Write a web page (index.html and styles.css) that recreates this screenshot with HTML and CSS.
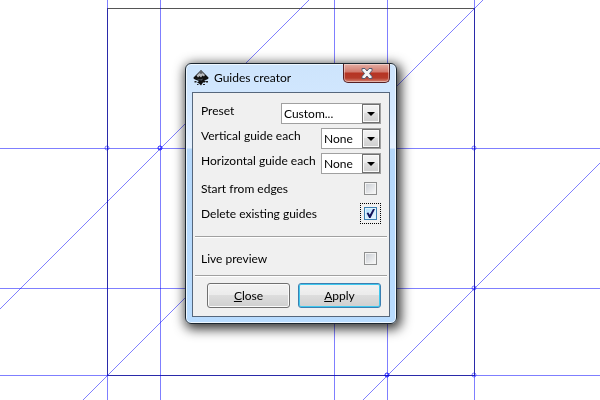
FILE: index.html
```html
<!DOCTYPE html>
<html lang="en">
<head>
  <meta charset="UTF-8">
  <title>Guides creator</title>
  <link rel="stylesheet" href="styles.css">
</head>
<body>

<svg class="canvas" aria-hidden="true">
  <rect class="page" x="107.5" y="8.5" width="367" height="367"/>
  <g class="guides">
    <path d="M107.5 0V2000M160.5 0V2000M334.5 0V2000M387.5 0V2000M474.5 0V2000"/>
    <path d="M0 148.5H4000M0 288.5H4000M0 375.5H4000"/>
    <path d="M309 0L0 309M483 0L0 483M763 0L0 763"/>
  </g>
  <g class="anchors">
    <circle cx="107" cy="148" r="2"/>
    <circle cx="160" cy="148" r="2"/>
    <circle cx="160" cy="148" r="2"/>
    <circle cx="474" cy="148" r="2"/>
    <circle cx="474" cy="288" r="2"/>
    <circle cx="387" cy="375" r="2"/>
    <circle cx="387" cy="375" r="2"/>
    <circle cx="474" cy="375" r="2"/>
  </g>
</svg>

<div class="window" role="dialog" aria-labelledby="title">
  <div class="titlebar">
    <svg class="logo" width="16" height="18" viewBox="0 0 16 18" aria-hidden="true">
      <path d="M8 1L15 8Q16.500 9.500 14 10.500L11 11.500L13 12L12 13.500H10L9 15L8 16.500L6 14.500L4 13.500L6 12L2 10.500Q-.5 9.500 1 8Z" fill="#111"/>
      <path d="M8 2L12 6L11 7.500L9.500 6.500L8 8.500L6.500 7L5 8.500L3.500 6.500Z" fill="#b9bcc0"/>
      <path d="M6 4L8 2L10 4L8 5Z" fill="#5a5e63"/>
      <path d="M3 9.500L7 10.500L10 9.500L9 11.500L6 11Z" fill="#4f5660"/>
      <path d="M1.500 12H3.500V13.500H1.500ZM13 12H15V13.500H13ZM4 15H5.500V16H4ZM10 15H12V16H10Z" fill="#222"/>
    </svg>
    <h1 id="title">Guides creator</h1>
    <button class="close" type="button" aria-label="Close window">
      <svg width="12" height="11" viewBox="0 0 12 11">
        <path d="M1 .5H4L6 3L8 .5H11V2.500L8.500 5.500L11 8.500V10.500H8L6 8L4 10.500H1V8.500L3.500 5.500L1 2.500Z" fill="#f4f4f4" stroke="#555b70"/>
      </svg>
    </button>
  </div>

  <form class="content">
    <div class="row">
      <label for="preset">Preset</label>
      <span class="combo wide">
        <select id="preset"><option>Custom...</option></select>
        <span class="arrow"><svg width="8" height="4"><path d="M0 0H8L4 4Z"/></svg></span>
      </span>
    </div>
    <div class="row">
      <label for="vertical">Vertical guide each</label>
      <span class="combo">
        <select id="vertical"><option>None</option></select>
        <span class="arrow"><svg width="8" height="4"><path d="M0 0H8L4 4Z"/></svg></span>
      </span>
    </div>
    <div class="row">
      <label for="horizontal">Horizontal guide each</label>
      <span class="combo">
        <select id="horizontal"><option>None</option></select>
        <span class="arrow"><svg width="8" height="4"><path d="M0 0H8L4 4Z"/></svg></span>
      </span>
    </div>
    <div class="row check">
      <label for="edges">Start from edges</label>
      <span class="tick"><input type="checkbox" id="edges"></span>
    </div>
    <div class="row check">
      <label for="delete">Delete existing guides</label>
      <span class="tick focused"><input type="checkbox" id="delete" checked></span>
    </div>
    <hr>
    <div class="row check preview">
      <label for="live">Live preview</label>
      <span class="tick"><input type="checkbox" id="live"></span>
    </div>
    <hr>
    <div class="actions">
      <button type="button"><u>C</u>lose</button>
      <button type="button" class="default"><u>A</u>pply</button>
    </div>
  </form>
</div>

</body>
</html>
```

FILE: styles.css
```css
* {
  box-sizing: border-box;
}
body {
  margin: 0;
  background: #fff;
  color: #000;
  font: 12px/16px Lato, "Open Sans", sans-serif;
}
.canvas {
  position: fixed;
  inset: 0;
  width: 100%;
  height: 100%;
}
.page {
  fill: none;
  stroke: #555;
}
.guides {
  stroke: rgba(0,0,255,0.5);
}
.guides path {
  fill: none;
}
.anchors {
  fill: none;
  stroke: rgba(0,0,255,0.5);
}

/* dialog window */
.window {
  position: absolute;
  left: 185px;
  top: 63px;
  width: 212px;
  padding: 0 6px 6px;
  border: 1px solid #1c2730;
  border-radius: 6px;
  background: linear-gradient(#cde4fc, #d3e8ff 45px, #e5f1ff 84px, #b5d8fb 85px, #b9dcff);
  box-shadow: inset 0 0 0 1px #eef7ff, 2px 3px 12px 2px rgba(0,0,0,0.8);
}
.titlebar {
  display: flex;
  align-items: center;
  gap: 5px;
  height: 28px;
  padding-left: 1px;
}
.titlebar h1 {
  flex: 1;
  margin: 0;
  font-size: 12px;
  font-weight: normal;
}
.close {
  display: flex;
  align-items: center;
  justify-content: center;
  align-self: flex-start;
  width: 47px;
  height: 19px;
  padding: 0;
  border: 1px solid #552024;
  border-top: 0;
  border-radius: 0 0 5px 5px;
  background: linear-gradient(#e5aea4, #d1796c 8px, #b63322 9px, #b53b2a 14px, #d98978);
  box-shadow: inset 0 0 0 1px rgba(255,255,255,0.4);
}
.content {
  padding: 10px 2px 8px;
  border: 1px solid #56677c;
  background: #f0f0f0;
}
.row {
  display: flex;
  justify-content: space-between;
  height: 25px;
  padding: 0 6px;
}
.row label {
  white-space: nowrap;
}

.combo {
  display: grid;
  flex: none;
  grid-template-columns: 1fr 18px;
  width: 60px;
  height: 21px;
  border: 1px solid #a0a0a0;
  background: #fff;
}
.combo.wide {
  width: 100px;
}
.combo select {
  grid-area: 1 / 1 / 2 / 3;
  min-width: 0;
  padding: 0 18px 0 2px;
  border: 0;
  background: none;
  color: #000;
  font: inherit;
  appearance: none;
}
.arrow {
  display: flex;
  grid-area: 1 / 2;
  align-items: center;
  justify-content: center;
  border: 1px solid #707070;
  background: linear-gradient(#f3f3f3, #ebebeb 50%, #ddd 50%, #cfcfcf);
  box-shadow: inset 0 0 0 1px #fafafa;
  pointer-events: none;
}

.check {
  align-items: center;
}
.row:not(.check) + .check {
  margin-top: -2px;
}
.tick {
  display: flex;
  align-items: center;
  justify-content: center;
  width: 21px;
  height: 21px;
}
.tick.focused {
  border: 1px dotted #000;
}
.tick input {
  width: 13px;
  height: 13px;
  margin: 0;
  padding: 1px;
  border: 1px solid #8e8f8f;
  background: linear-gradient(135deg, #cbcfd5, #f6f6f6) content-box, #f4f4f4;
  appearance: none;
}
.tick input:checked {
  border-color: #3c7fb1;
  background: linear-gradient(135deg, #b1dffd, #e9f7fe) content-box, #def4ff;
}
.tick input:checked::before {
  content: "";
  display: block;
  height: 9px;
  background: #12125a;
  clip-path: polygon(6% 45%, 26% 40%, 42% 64%, 78% 0, 100% 0, 50% 100%, 35% 100%);
}
hr {
  height: 2px;
  margin: 10px 0 8px;
  border: 0;
  border-top: 1px solid #a0a0a0;
  border-bottom: 1px solid #fff;
}
.preview + hr {
  margin: 4px 0 6px;
}

.actions {
  display: flex;
  gap: 8px;
  padding: 0 6px 0 12px;
}
.actions button {
  flex: 1;
  height: 25px;
  padding: 0;
  border: 1px solid #707070;
  border-radius: 3px;
  background: linear-gradient(#f2f2f2, #ebebeb 50%, #ddd 50%, #cfcfcf);
  box-shadow: inset 0 0 0 1px #fafafa;
  color: #000;
  font: inherit;
}
.actions .default {
  border-color: #3c7fb1;
  box-shadow: inset 0 0 0 1px #3fc8ee;
}
```
